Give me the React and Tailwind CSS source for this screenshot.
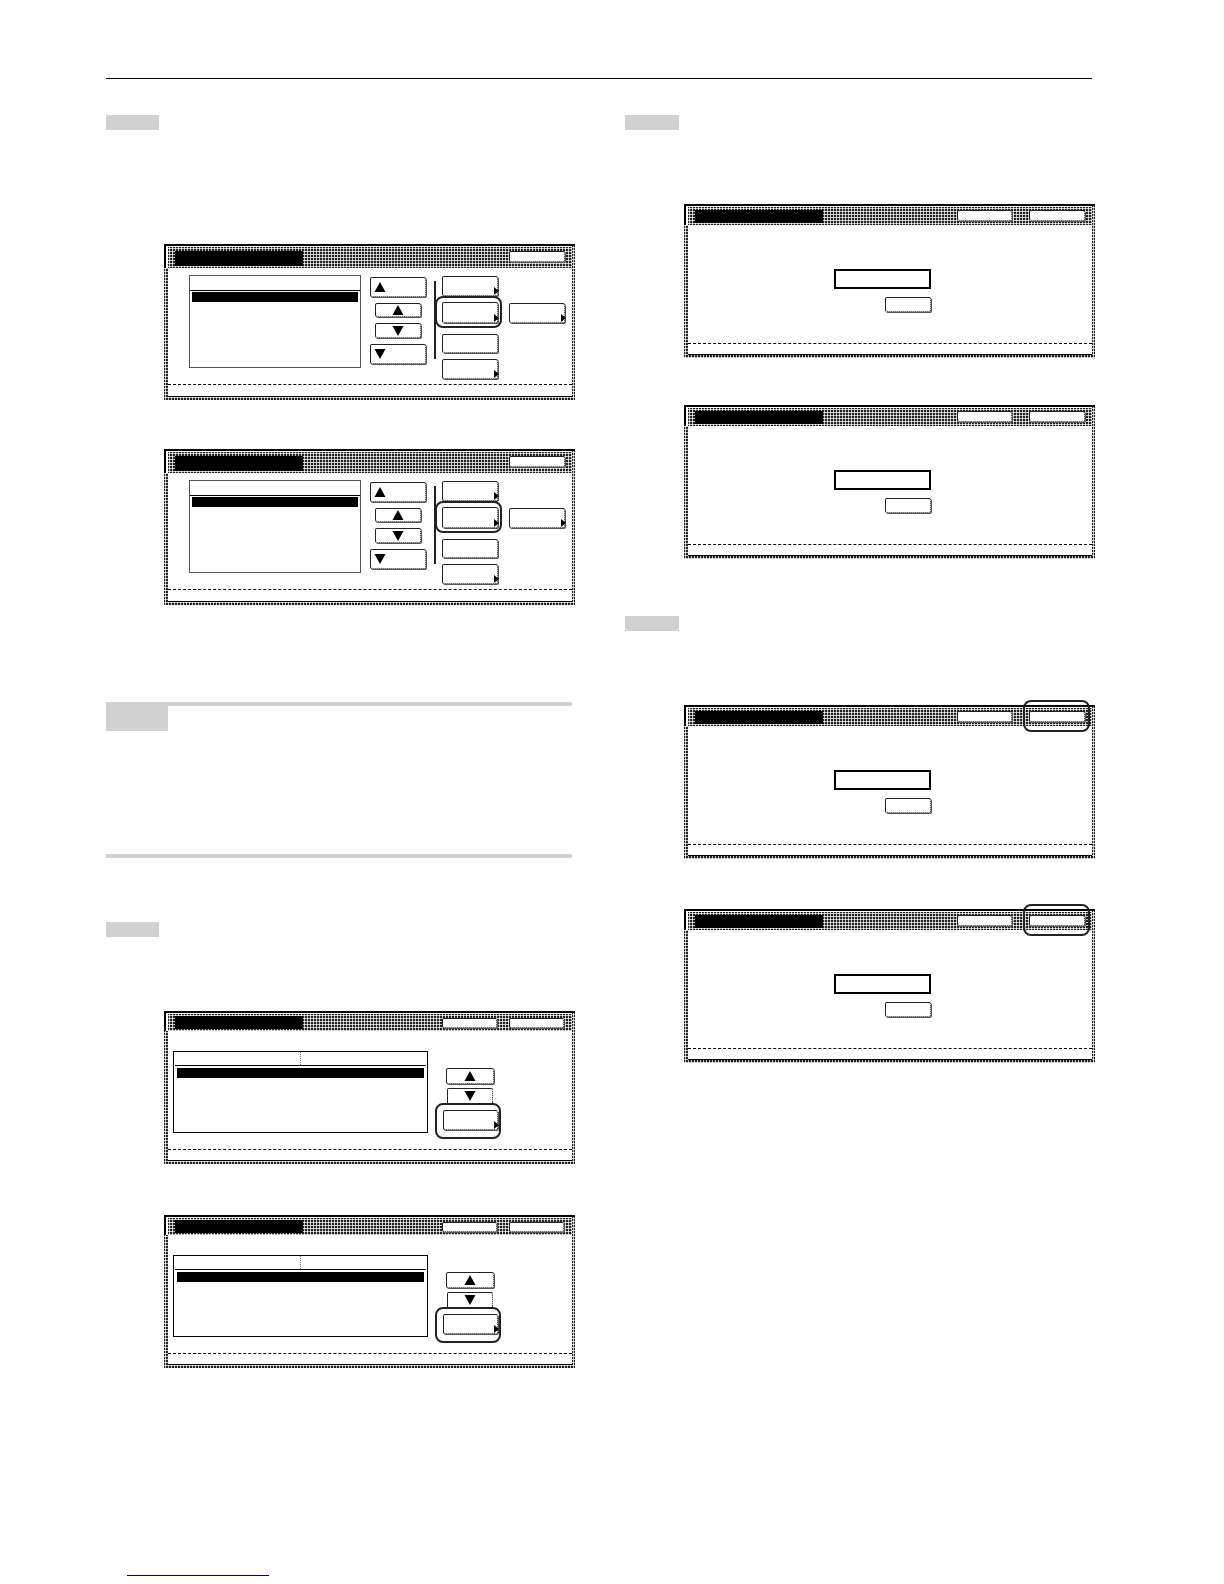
import React from "react";

const DITHER =
  "bg-[radial-gradient(circle,#fff_0.9px,#222_1.25px)] bg-[length:3px_3px]";
const BTN =
  "relative bg-white rounded-[2px] border border-[#222] [border-style:solid_dotted_dotted_solid] shadow-[1px_1px_0_#555]";

function Up({ className }) {
  return (
    <svg viewBox="0 0 11 10" className={className}>
      <polygon points="5.5,0 11,10 0,10" fill="#000" />
    </svg>
  );
}

function Down({ className }) {
  return (
    <svg viewBox="0 0 11 10" className={className}>
      <polygon points="0,0 11,0 5.5,10" fill="#000" />
    </svg>
  );
}

// small arrow in the lower right corner of a button
function Corner() {
  return (
    <svg viewBox="0 0 5 8" className="absolute right-[-2px] bottom-0 w-[5px] h-[8px]">
      <polygon points="0,0 5,4 0,8" fill="#000" />
    </svg>
  );
}

function Ring({ className }) {
  return (
    <div className={`absolute border-2 border-[#222] rounded-[8px] pointer-events-none ${className}`} />
  );
}

function Frame({ height, children }) {
  return (
    <div className={`flex flex-col w-[411px] ${height} border-t-2 border-black pl-[4px] pr-[3px] pb-[3px] ${DITHER}`}>
      {children}
    </div>
  );
}

// black edge + white gap on the left and top of the title strip
function TitleBar({ height, className, children }) {
  return (
    <div className={`-ml-[4px] ${height} pl-[2px] pt-[1px] border-l-2 border-black bg-white`}>
      <div className={`flex items-start h-full pl-[7px] ${className} ${DITHER}`}>{children}</div>
    </div>
  );
}

// Two row list screen with the four scroll buttons
function ListScreen() {
  return (
    <Frame height="h-[156px]">
      <TitleBar height="h-[22px]" className="pt-[4px] pr-[7px]">
        <div className="w-[128px] h-[15px] bg-black" />
        <div className={`${BTN} ml-auto w-[56px] h-[11px]`} />
      </TitleBar>
      <div className="flex-1 flex items-start bg-white pl-[21px] pt-[7px]">
        <div className="w-[172px] h-[93px] border border-[#555]">
          <div className="h-[15px] border-b border-black" />
          <div className="h-[10px] mt-[1px] mx-[2px] bg-black" />
        </div>
        <div className="flex flex-col items-center w-[56px] ml-[9px] mt-[2px] gap-[6px]">
          <div className={`${BTN} w-[56px] h-[20px] pl-[3px] pt-[4px]`}>
            <Up className="w-[12px] h-[10px]" />
          </div>
          <div className={`${BTN} flex items-center justify-center w-[46px] h-[14px]`}>
            <Up className="w-[12px] h-[10px]" />
          </div>
          <div className={`${BTN} flex items-center justify-center w-[46px] h-[15px]`}>
            <Down className="w-[12px] h-[10px]" />
          </div>
          <div className={`${BTN} w-[56px] h-[20px] pl-[3px] pt-[4px]`}>
            <Down className="w-[12px] h-[10px]" />
          </div>
        </div>
        <div className="w-[2px] h-[78px] ml-[8px] mt-[6px] bg-[#222]" />
        <div className="flex flex-col w-[56px] ml-[6px] mt-[1px]">
          <div className={`${BTN} h-[20px]`}>
            <Corner />
          </div>
          <div className={`${BTN} h-[21px] mt-[6px]`}>
            <Corner />
            <Ring className="-left-[8px] -right-[5px] -top-[7px] -bottom-[6px]" />
          </div>
          <div className={`${BTN} h-[19px] mt-[11px]`} />
          <div className={`${BTN} h-[20px] mt-[6px]`}>
            <Corner />
          </div>
        </div>
        <div className={`${BTN} w-[56px] h-[20px] ml-[11px] mt-[28px]`}>
          <Corner />
        </div>
      </div>
      <div className="h-[13px] bg-white border-t border-b border-t-black border-b-black [border-top-style:dashed]" />
    </Frame>
  );
}

// Table screen with two columns and the up / down buttons
function TableScreen() {
  return (
    <Frame height="h-[153px]">
      <TitleBar height="h-[18px]" className="pt-[2px] pr-[8px]">
        <div className="w-[128px] h-[13px] bg-black" />
        <div className={`${BTN} ml-auto mt-[2px] w-[55px] h-[10px]`} />
        <div className={`${BTN} ml-[12px] mt-[2px] w-[55px] h-[10px]`} />
      </TitleBar>
      <div className="flex-1 flex items-start bg-white pl-[5px] pt-[20px]">
        <div className="w-[255px] h-[82px] border border-black">
          <div className="h-[14px] mx-[1px] border-b border-black">
            <div className="w-[126px] h-full border-r border-dotted border-[#777]" />
          </div>
          <div className="h-[10px] mt-[2px] mx-[3px] bg-black" />
        </div>
        <div className="flex flex-col items-center w-[56px] ml-[14px] mt-[17px]">
          <div className={`${BTN} flex items-center justify-center w-[48px] h-[16px]`}>
            <Up className="w-[12px] h-[10px]" />
          </div>
          <div className="relative flex items-center justify-center w-[46px] h-[15px] mt-[4px] bg-white rounded-t-[2px] border-t border-l border-r border-[#222] [border-style:solid_dotted_none_solid]">
            <Down className="w-[12px] h-[10px]" />
          </div>
          <div className={`${BTN} w-[55px] h-[20px] mt-[7px]`}>
            <Corner />
            <Ring className="-left-[9px] -right-[4px] -top-[8px] -bottom-[10px]" />
          </div>
        </div>
      </div>
      <div className="h-[12px] bg-white border-t border-b border-t-black border-b-black [border-top-style:dashed]" />
    </Frame>
  );
}

// Entry screen with one input box
function InputScreen({ ring }) {
  return (
    <Frame height="h-[154px]">
      <TitleBar height="h-[19px]" className="pt-[3px] pr-[7px]">
        <div className="w-[128px] h-[13px] bg-black" />
        <div className={`${BTN} ml-auto w-[55px] h-[11px]`} />
        <div className={`${BTN} ml-[17px] w-[56px] h-[11px]`}>
          {ring && <Ring className="-left-[7px] -right-[6px] -top-[12px] -bottom-[11px]" />}
        </div>
      </TitleBar>
      <div className="flex-1 bg-white pl-[146px] pt-[44px]">
        <div className="flex flex-col items-end w-[97px] gap-[8px]">
          <div className="w-full h-[20px] border-2 border-black" />
          <div className={`${BTN} w-[46px] h-[15px]`} />
        </div>
      </div>
      <div className="h-[12px] bg-white border-t border-b border-t-black border-b-black [border-top-style:dashed]" />
    </Frame>
  );
}

function StepTag({ className }) {
  return <div className={`h-[15px] bg-[#d1d1d1] ${className}`} />;
}

export default function App() {
  return (
    <div className="w-[1224px] h-[1584px] overflow-hidden bg-white">
      <div className="h-[1px] w-[986px] ml-[106px] mt-[78px] bg-black" />
      <div className="flex pl-[106px]">
        {/* Left column */}
        <div className="w-[519px]">
          <StepTag className="w-[53px] mt-[36px]" />
          <div className="ml-[58px] mt-[114px]">
            <ListScreen />
          </div>
          <div className="ml-[58px] mt-[49px]">
            <ListScreen />
          </div>

          {/* Note block */}
          <div className="w-[466px] h-[156px] mt-[97px] border-t-4 border-b-4 border-[#d1d1d1]">
            <div className="w-[62px] h-[25px] bg-[#d1d1d1]" />
          </div>

          <StepTag className="w-[53px] mt-[64px]" />
          <div className="ml-[58px] mt-[74px]">
            <TableScreen />
          </div>
          <div className="ml-[58px] mt-[51px]">
            <TableScreen />
          </div>

          {/* link underline at the page foot */}
          <div className="w-[142px] h-[1px] ml-[21px] mt-[207px] bg-[#00008b]" />
        </div>

        {/* Right column */}
        <div className="w-[467px]">
          <StepTag className="w-[54px] mt-[36px]" />
          <div className="ml-[59px] mt-[74px]">
            <InputScreen />
          </div>
          <div className="ml-[59px] mt-[47px]">
            <InputScreen />
          </div>
          <StepTag className="w-[54px] mt-[57px]" />
          <div className="ml-[59px] mt-[74px]">
            <InputScreen ring />
          </div>
          <div className="ml-[59px] mt-[50px]">
            <InputScreen ring />
          </div>
        </div>
      </div>
    </div>
  );
}
